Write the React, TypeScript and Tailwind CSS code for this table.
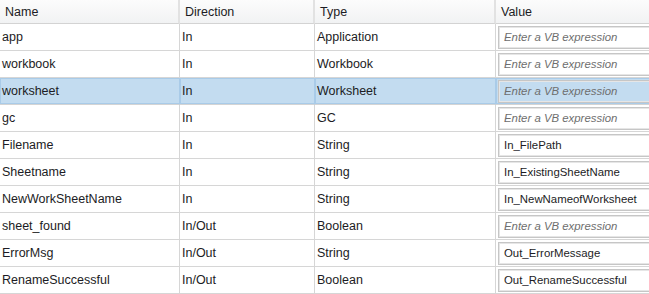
import React from 'react';

type Arg = {
  name: string;
  direction: string;
  type: string;
  value?: string;
};

const args: Arg[] = [
  { name: 'app', direction: 'In', type: 'Application' },
  { name: 'workbook', direction: 'In', type: 'Workbook' },
  { name: 'worksheet', direction: 'In', type: 'Worksheet' },
  { name: 'gc', direction: 'In', type: 'GC' },
  { name: 'Filename', direction: 'In', type: 'String', value: 'In_FilePath' },
  { name: 'Sheetname', direction: 'In', type: 'String', value: 'In_ExistingSheetName' },
  { name: 'NewWorkSheetName', direction: 'In', type: 'String', value: 'In_NewNameofWorksheet' },
  { name: 'sheet_found', direction: 'In/Out', type: 'Boolean' },
  { name: 'ErrorMsg', direction: 'In/Out', type: 'String', value: 'Out_ErrorMessage' },
  { name: 'RenameSuccessful', direction: 'In/Out', type: 'Boolean', value: 'Out_RenameSuccessful' },
];

const cols = 'grid grid-cols-[180px_135px_181px_1fr]';

const ArgRow: React.FC<{ arg: Arg; selected: boolean }> = ({ arg, selected }) => {
  const cell = selected
    ? 'h-[27px] border-r border-b border-r-[#a9cbe8] border-b-[#d4d4d4] bg-[#c3dcf0] flex items-center pl-[2px] pt-[1px] shadow-[inset_0_1px_0_#a9cbe8,inset_1px_0_0_#a9cbe8,inset_0_-1px_0_#a9cbe8]'
    : 'h-[27px] border-r border-b border-[#d6d6d6] flex items-center pl-[2px] pt-[1px]';

  return (
    <div className={cols}>
      <div className={cell}>{arg.name}</div>
      <div className={cell}>{arg.direction}</div>
      <div className={cell}>{arg.type}</div>
      <div className={`${selected ? 'h-[27px] border-b border-[#d4d4d4] bg-[#c3dcf0] shadow-[inset_0_1px_0_#a9cbe8,inset_1px_0_0_#a9cbe8,inset_0_-1px_0_#a9cbe8]' : 'h-[27px] border-b border-[#d6d6d6]'} flex items-center pl-[2px] overflow-hidden`}>
        <div className="h-[23px] w-[170px] shrink-0 border border-[#c6c6c6] shadow-[inset_0_0_0_1px_#e6e6e6] flex items-center pl-[5px] pt-[1px] whitespace-nowrap text-[11.4px]">
          {arg.value ? (
            <span>{arg.value}</span>
          ) : (
            <span className="italic text-[#6e6e6e]">Enter a VB expression</span>
          )}
        </div>
      </div>
    </div>
  );
};

export default function App() {
  return (
    <div className="w-[649px] h-[294px] overflow-hidden bg-white text-[12.5px] text-[#1c1c24] font-['Liberation_Sans',Arial,sans-serif]">
      <div className={`${cols} bg-gradient-to-b from-[#fcfcfc] to-[#f1f2f3]`}>
        <div className="h-[24px] border-r-2 border-b border-r-[#e2e2e2] border-b-[#d3d3d3] flex items-center pl-[5px] pt-[1px]">Name</div>
        <div className="h-[24px] border-r-2 border-b border-r-[#e2e2e2] border-b-[#d3d3d3] flex items-center pl-[5px] pt-[1px]">Direction</div>
        <div className="h-[24px] border-r-2 border-b border-r-[#e2e2e2] border-b-[#d3d3d3] flex items-center pl-[5px] pt-[1px]">Type</div>
        <div className="h-[24px] border-b border-[#d3d3d3] flex items-center pl-[5px] pt-[1px]">Value</div>
      </div>
      {args.map((a) => (
        <ArgRow key={a.name} arg={a} selected={a.name === 'worksheet'} />
      ))}
    </div>
  );
}
